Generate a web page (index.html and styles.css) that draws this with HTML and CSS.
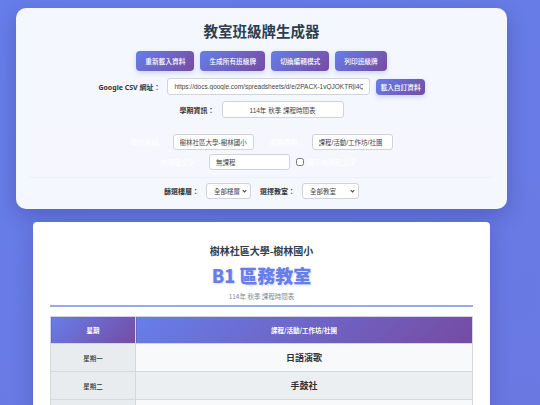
FILE: index.html
```html
<!DOCTYPE html>
<html lang="zh-Hant">
<head>
    <meta charset="UTF-8">
    <meta name="viewport" content="width=device-width, initial-scale=1.0">
    <title>教室班級牌生成器</title>
    <link rel="stylesheet" href="styles.css">
</head>
<body>
    <div class="control-panel">
        <h1>教室班級牌生成器</h1>
        <div class="button-row">
            <button class="btn">重新載入資料</button>
            <button class="btn">生成所有班級牌</button>
            <button class="btn">切換編輯模式</button>
            <button class="btn">列印班級牌</button>
        </div>
        <div class="field-row">
            <label>Google CSV 網址：</label>
            <input type="text" class="csv-input" value="https://docs.google.com/spreadsheets/d/e/2PACX-1vQJOKTRjl4QISn">
            <button class="btn btn-small">載入自訂資料</button>
        </div>
        <div class="field-row">
            <label>學期資訊：</label>
            <input type="text" class="term-input" value="114年 秋季 課程時間表">
        </div>
        <div class="edit-panel">
            <div class="field-row">
                <label class="light">學校名稱：</label>
                <input type="text" class="edit-input" value="樹林社區大學-樹林國小">
                <label class="light gap-left">表格標題：</label>
                <input type="text" class="edit-input" value="課程/活動/工作坊/社團">
            </div>
            <div class="field-row">
                <label class="light">無課程文字：</label>
                <input type="text" class="edit-input" value="無課程">
                <input type="checkbox" class="check">
                <label class="light">顯示無課程文字</label>
            </div>
        </div>
        <div class="field-row filter-row">
            <label>篩選樓層：</label>
            <span class="select-wrap floor-select">
                <select>
                    <option>全部樓層</option>
                </select>
            </span>
            <label class="gap-left-sm">選擇教室：</label>
            <span class="select-wrap room-select">
                <select>
                    <option>全部教室</option>
                </select>
            </span>
        </div>
    </div>

    <div class="sign-card">
        <div class="sign-header">
            <div class="school-name">樹林社區大學-樹林國小</div>
            <div class="room-name">B1 區務教室</div>
            <div class="term-name">114年 秋季 課程時間表</div>
        </div>
        <table class="schedule">
            <thead>
                <tr>
                    <th class="day-col">星期</th>
                    <th>課程/活動/工作坊/社團</th>
                </tr>
            </thead>
            <tbody>
                <tr>
                    <td class="day-col">星期一</td>
                    <td class="course">日語演歌</td>
                </tr>
                <tr>
                    <td class="day-col">星期二</td>
                    <td class="course">手鼓社</td>
                </tr>
                <tr>
                    <td class="day-col">星期三</td>
                    <td class="course">書法班</td>
                </tr>
            </tbody>
        </table>
    </div>
</body>
</html>
```

FILE: styles.css
```css
body {
    font-family: "Noto Sans", "Noto Sans CJK TC", sans-serif;
    background: linear-gradient(160deg, #667eea 0%, #6a78e2 100%);
    margin: 0;
    padding: 8px 33px 0 16px;
    height: 405px;
    box-sizing: border-box;
    overflow: hidden;
}
.control-panel {
    background-color: #f5f7fe;
    border-radius: 10px;
    box-shadow: 0 6px 20px rgba(40, 40, 110, 0.3);
    padding: 14px 12px 10px;
    text-align: center;
}
.control-panel h1 {
    margin: 0;
    font-size: 14.5px;
    line-height: 18px;
    font-weight: 700;
    color: #2c3e50;
}
.button-row {
    display: flex;
    justify-content: center;
    gap: 6px;
    margin-top: 11px;
}
.btn {
    font-family: "Noto Sans CJK TC", sans-serif;
    height: 20px;
    padding: 0 9px;
    border: none;
    border-radius: 4px;
    background: linear-gradient(135deg, #667eea 0%, #764ba2 100%);
    color: #fff;
    font-size: 6.7px;
    font-weight: 500;
    box-shadow: 0 2px 5px rgba(102, 126, 234, 0.3);
    cursor: pointer;
}
.btn-small {
    height: 16px;
    padding: 0 4px;
    margin-left: 6px;
}
.field-row {
    display: flex;
    justify-content: center;
    align-items: center;
    margin-top: 7px;
}
.field-row + .field-row {
    margin-top: 6px;
}
.field-row label {
    font-size: 7px;
    font-weight: 700;
    color: #333;
    margin-right: 7px;
}
.field-row input[type="text"], .field-row select {
    font-family: "Liberation Sans", "Noto Sans CJK TC", sans-serif;
    font-size: 6.5px;
    height: 17px;
    border: 1px solid #cfd3da;
    border-radius: 3px;
    background: #fff;
    color: #444;
    box-sizing: border-box;
    padding: 0 6px;
}
.csv-input {
    width: 203px;
}
.term-input {
    width: 122px;
    text-align: center;
}
.edit-panel {
    margin-top: 7px;
    padding: 9px 0 7px;
    border-radius: 6px;
    background-color: #f6f7fe;
    box-shadow: 0 1px 0 rgba(120, 130, 200, 0.06);
}
.edit-panel .field-row {
    margin-top: 0;
}
.edit-panel .field-row + .field-row {
    margin-top: 4px;
}
.edit-panel input[type="text"] {
    height: 16px;
}
.field-row label.light {
    color: #fff;
    font-weight: 400;
}
.edit-input {
    width: 81px;
}
.gap-left {
    margin-left: 16px;
}
.gap-left-sm {
    margin-left: 9px;
}
.check {
    width: 8px;
    height: 8px;
    margin: 0 3px 0 6px;
}
.filter-row {
    margin-top: 6px;
}
/* native arrow is too big at this size, draw a small chevron instead */
.select-wrap {
    position: relative;
    display: block;
}
.select-wrap select {
    display: block;
    -webkit-appearance: none;
    appearance: none;
    width: 100%;
    height: 16px;
    padding: 0 10px 0 7px;
}
.select-wrap::after {
    content: "";
    position: absolute;
    right: 5px;
    top: 6px;
    width: 2px;
    height: 2px;
    border-right: 1px solid #333;
    border-bottom: 1px solid #333;
    transform: rotate(45deg);
    pointer-events: none;
}
.floor-select {
    width: 45px;
}
.room-select {
    width: 57px;
}
.sign-card {
    background-color: #fff;
    border-radius: 4px;
    margin: 13px 17px 0;
    padding: 22px 17px 17px;
    box-shadow: 0 6px 20px rgba(40, 40, 110, 0.25);
    font-family: "Noto Sans CJK TC", sans-serif;
}
.sign-header {
    text-align: center;
    border-bottom: 2px solid #9aa8ef;
    padding-bottom: 4px;
}
.school-name {
    font-size: 10px;
    line-height: 14px;
    font-weight: 700;
    color: #2c3e50;
}
.room-name {
    margin-top: 6px;
    font-size: 18px;
    line-height: 22px;
    font-weight: 900;
    color: #667eea;
    text-shadow: 1px 1px 2px rgba(102, 126, 234, 0.3);
}
.term-name {
    margin-top: 6px;
    font-size: 6.5px;
    line-height: 9px;
    color: #7f8c8d;
}
.schedule {
    width: 100%;
    margin-top: 9px;
    border-collapse: collapse;
    border: 1px solid #d3d6e4;
}
.schedule th {
    height: 26px;
    padding: 0;
    background: linear-gradient(135deg, #667eea 0%, #764ba2 100%);
    color: #fff;
    font-size: 6.5px;
    font-weight: 700;
    border: 1px solid #d3d6e4;
}
.schedule td {
    height: 27px;
    padding: 0;
    text-align: center;
    border: 1px solid #d5d8dc;
    background-color: #f8f9fa;
}
.schedule .day-col {
    width: 84px;
}
.schedule td.day-col {
    background-color: #e9ecef;
    font-size: 6.5px;
    font-weight: 500;
    color: #333;
}
.schedule td.course {
    font-size: 9px;
    font-weight: 700;
    color: #333;
}
.schedule tbody tr:nth-child(even) td.course {
    background-color: #eceff1;
}
```
